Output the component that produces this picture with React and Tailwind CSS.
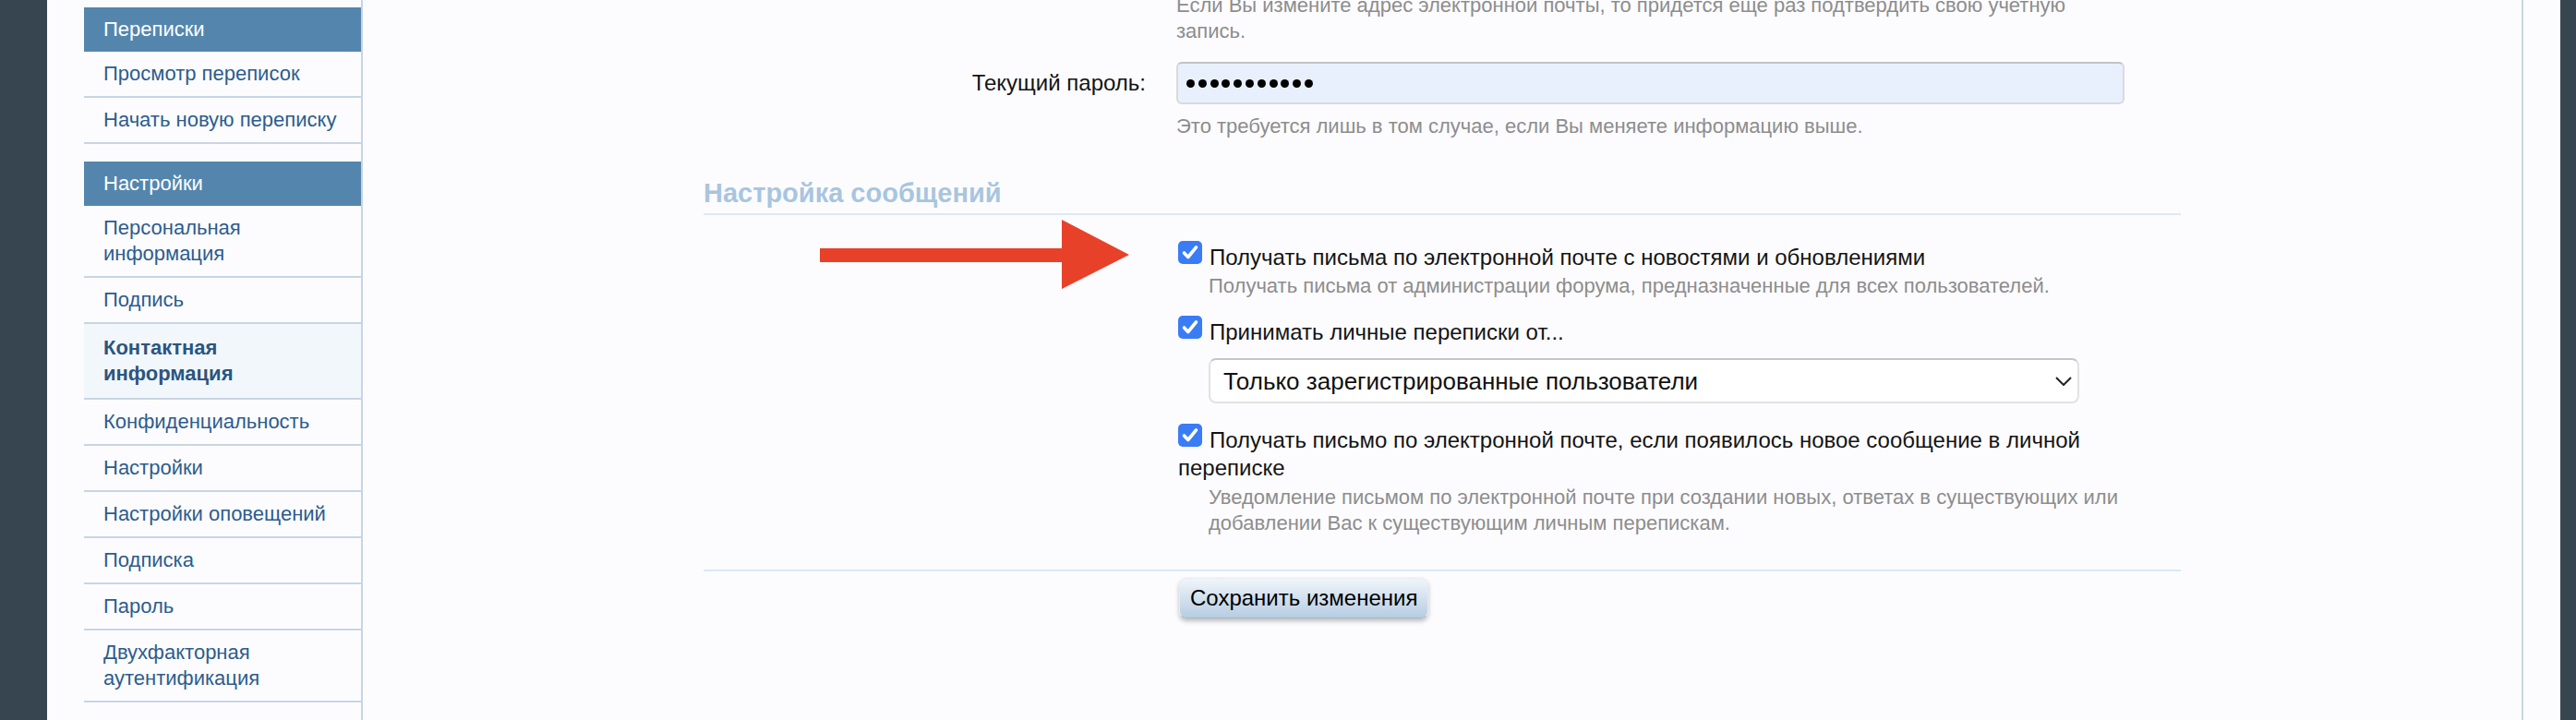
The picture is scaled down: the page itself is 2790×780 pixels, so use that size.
import React from 'react';

const font = "font-['Liberation_Sans',Arial,sans-serif]";

const sections = [
  {
    title: 'Переписки',
    items: [{ label: 'Просмотр переписок' }, { label: 'Начать новую переписку' }],
  },
  {
    title: 'Настройки',
    items: [
      { label: 'Персональная информация', two: true },
      { label: 'Подпись' },
      { label: 'Контактная информация', two: true, active: true },
      { label: 'Конфиденциальность' },
      { label: 'Настройки' },
      { label: 'Настройки оповещений' },
      { label: 'Подписка' },
      { label: 'Пароль' },
      { label: 'Двухфакторная аутентификация', two: true },
    ],
  },
];

const Checkbox = () => (
  <span className="relative -top-[7px] inline-flex w-[26px] h-[25px] mr-[8px] align-middle items-center justify-center rounded-[5px] bg-[#3a7cf5]">
    <svg width="26" height="25" viewBox="0 0 26 25">
      <path d="M6.5 13 L10.8 17.5 L19.5 6.8" fill="none" stroke="#fff" strokeWidth="3.6" strokeLinecap="round" strokeLinejoin="round" />
    </svg>
  </span>
);

const Sidebar = () => (
  <aside className="w-[302px] shrink-0 border-r-2 border-[#c7d5e3] pt-[8px]">
    {sections.map((section, i) => (
      <div key={i} className={i > 0 ? 'mt-[19px]' : ''}>
        <div className="h-[48px] leading-[48px] px-[21px] bg-[#5486ad] text-white text-[22px]">{section.title}</div>
        {section.items.map((item, j) => (
          <div
            key={j}
            className={`px-[21px] border-b-2 border-[#c8d5e3] text-[22px] leading-[28px] ${
              item.two ? (item.active ? 'h-[82px] py-[12px]' : 'h-[78px] py-[10px]') : 'h-[50px] py-[10px]'
            } ${item.active ? 'bg-[#f2f7fb] font-bold text-[#2a5582]' : 'text-[#2d5c8e]'}`}
          >
            {item.two ? (
              <>
                {item.label.split(' ')[0]}
                <br />
                {item.label.split(' ')[1]}
              </>
            ) : (
              item.label
            )}
          </div>
        ))}
      </div>
    ))}
  </aside>
);

const Row = ({ label, children, className = '' }) => (
  <div className={`flex ${className}`}>
    <div className="w-[479px] shrink-0 text-right text-[24px] text-[#141414] h-[46px] leading-[46px]">{label}</div>
    <div className="ml-[33px] w-[1027px]">{children}</div>
  </div>
);

const Hint = ({ children, className = '' }) => (
  <p className={`text-[22px] leading-[28px] text-[#8d8d8d] ${className}`}>{children}</p>
);

export default function App() {
  return (
    <div className={`relative flex w-[2790px] h-[780px] overflow-hidden bg-[#36454f] ${font}`}>
      <div className="ml-[51px] w-[2722px] h-full flex px-[40px] bg-[#fcfcfe]">
        <Sidebar />
        <main className="w-[2340px] shrink-0 border-r-2 border-[#c7d5e3]">
          <div className="w-[1600px] mx-auto">
            <Row label="" className="-mt-[8px] [&>div:first-child]:h-auto">
              <Hint>
                Если Вы измените адрес электронной почты, то придется еще раз подтвердить свою учетную
                <br />
                запись.
              </Hint>
            </Row>

            <Row label="Текущий пароль:" className="mt-[19px]">
              <div className="h-[46px] w-[1027px] rounded-[6px] border-2 border-[#dadada] border-t-[#c2c2c2] bg-[#e8f0fe] flex items-center pl-[9px] gap-[3.8px]">
                {Array.from({ length: 11 }).map((_, i) => (
                  <span key={i} className="w-[9px] h-[9px] rounded-full bg-black" />
                ))}
              </div>
              <Hint className="mt-[10px]">Это требуется лишь в том случае, если Вы меняете информацию выше.</Hint>
            </Row>

            <h3 className="mt-[41px] text-[29px] leading-[34px] font-bold text-[#a8c5df] pb-[5px] border-b-2 border-[#dbe9f7]">
              Настройка сообщений
            </h3>

            <div className="flex mt-[31px]">
              <div className="w-[479px] shrink-0" />
              <div className="ml-[35px] w-[1025px] text-[24px] leading-[30px] text-[#141414]">
                <label className="block">
                  <Checkbox />
                  Получать письма по электронной почте с новостями и обновлениями
                </label>
                <Hint className="mt-[2px] pl-[33px]">
                  Получать письма от администрации форума, предназначенные для всех пользователей.
                </Hint>

                <label className="block mt-[21px]">
                  <Checkbox />
                  Принимать личные переписки от...
                </label>
                <div className="ml-[33px] mt-[13px] w-[943px] h-[49px] rounded-[8px] border-2 border-[#e2e2e2] border-t-[#c6c6c6] bg-white flex items-center justify-between pl-[14px] pr-[6px]">
                  <span className="text-[26px] text-[#111]">Только зарегистрированные пользователи</span>
                  <svg width="18" height="10" viewBox="0 0 18 10">
                    <path d="M1 1 L9 9 L17 1" fill="none" stroke="#222" strokeWidth="2" />
                  </svg>
                </div>

                <label className="block mt-[25px]">
                  <Checkbox />
                  Получать письмо по электронной почте, если появилось новое сообщение в личной переписке
                </label>
                <Hint className="mt-[3px] pl-[33px]">
                  Уведомление письмом по электронной почте при создании новых, ответах в существующих или
                  добавлении Вас к существующим личным перепискам.
                </Hint>
              </div>
            </div>

            <div className="mt-[36px] border-t-2 border-[#dbe9f7]" />

            <div className="flex mt-[7px]">
              <div className="w-[479px] shrink-0" />
              <button className="ml-[36px] h-[44px] px-[11px] rounded-[8px] border border-[#e6ecf3] border-b-[#a9b7c6] bg-gradient-to-b from-[#f1f5fa] to-[#b6cde2] shadow-[0_3px_5px_rgba(0,0,0,0.25)] text-[24px] text-black">
                Сохранить изменения
              </button>
            </div>
          </div>
        </main>
      </div>

      {/* red pointer arrow */}
      <svg className="absolute left-[888px] top-[238px]" width="336" height="76" viewBox="0 0 336 76">
        <polygon points="0,31 262,31 262,0 335,38 262,75 262,46 0,46" fill="#e8412a" />
      </svg>
    </div>
  );
}
